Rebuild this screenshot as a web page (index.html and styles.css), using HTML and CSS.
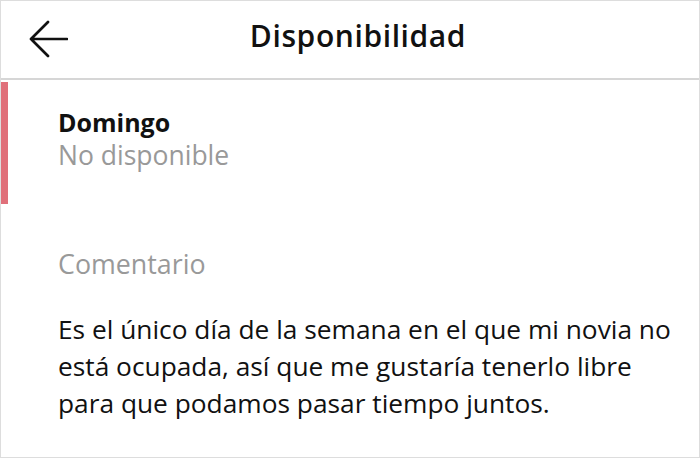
FILE: index.html
```html
<!DOCTYPE html>
<html lang="es">
<head>
<meta charset="utf-8">
<link rel="stylesheet" href="styles.css">
</head>
<body>
<div class="frame">
  <header class="header">
    <span class="back">
      <svg width="40" height="40" viewBox="0 0 40 40"><path d="M39 20H3M20 3L3 20L20 37" fill="none" stroke="#111" stroke-width="2.7" stroke-linecap="round" stroke-linejoin="round"/></svg>
    </span>
    <h1 class="title">Disponibilidad</h1>
  </header>
  <section class="day">
    <div class="day-name">Domingo</div>
    <div class="day-status">No disponible</div>
  </section>
  <section class="comment">
    <div class="comment-label">Comentario</div>
    <p class="comment-text">Es el único día de la semana en el que mi novia no está ocupada, así que me gustaría tenerlo libre para que podamos pasar tiempo juntos.</p>
  </section>
</div>
</body>
</html>
```
FILE: styles.css
```css
html, body { margin: 0; padding: 0; }
body { background: #fff; font-family: "Open Sans", "Noto Sans", sans-serif; color: #111; }
.frame { width: 700px; height: 458px; box-sizing: border-box; border: 1px solid #ddd; overflow: hidden; }
.header { height: 79px; box-sizing: border-box; padding-bottom: 9px; border-bottom: 2px solid #d6d6d6; display: flex; align-items: center; position: relative; }
.back { position: absolute; left: 27px; top: 18px; display: flex; }
.title { flex: 1; margin: 0; text-align: center; font-size: 30px; font-weight: 600; padding-left: 16px; letter-spacing: 0.6px; }
.day { border-left: 7px solid #e0707a; margin-top: 2px; height: 122px; box-sizing: border-box; padding: 24px 0 0 50px; }
.day-name { font-size: 25px; font-weight: 700; line-height: 32px; }
.day-status { font-size: 26.5px; color: #999; line-height: 35px; }
.comment { padding: 43px 14px 0 57px; }
.comment-label { font-size: 26.8px; color: #999; line-height: 34px; }
.comment-text { margin: 30px 0 0; font-size: 26.3px; line-height: 37px; color: #111; }
```
